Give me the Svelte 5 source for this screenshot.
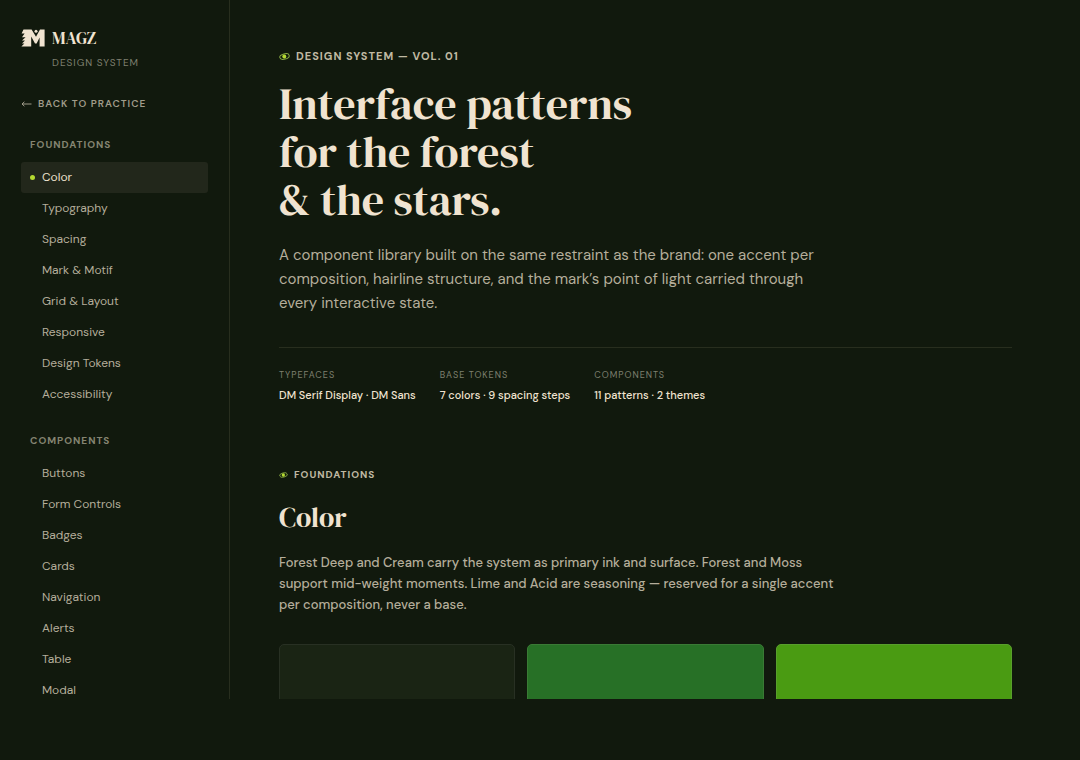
<script lang="ts">
  const groups = [
    {
      title: 'Foundations',
      items: ['Color', 'Typography', 'Spacing', 'Mark & Motif', 'Grid & Layout', 'Responsive', 'Design Tokens', 'Accessibility'],
    },
    {
      title: 'Components',
      items: ['Buttons', 'Form Controls', 'Badges', 'Cards', 'Navigation', 'Alerts', 'Table', 'Modal'],
    },
  ];

  const meta = [
    { label: 'Typefaces', value: 'DM Serif Display · DM Sans' },
    { label: 'Base tokens', value: '7 colors · 9 spacing steps' },
    { label: 'Components', value: '11 patterns · 2 themes' },
  ];

  const swatches = ['deep', 'forest', 'moss'];

  let active = $state('Color');

  function slug(name: string) {
    return name.toLowerCase().replace(/[^a-z]+/g, '-');
  }
</script>

{#snippet orbit()}
  <svg class="orbit" viewBox="0 0 22 14" aria-hidden="true">
    <ellipse cx="11" cy="7" rx="9.6" ry="5.2" transform="rotate(-14 11 7)" />
    <circle cx="10.6" cy="7" r="4" />
  </svg>
{/snippet}

<div class="shell">
  <aside class="sidebar">
    <div class="brand">
      <svg class="mark" viewBox="0 0 24 18" aria-hidden="true">
        <path d="M2.5 0.6H10.6L15 7.8L19 0.6H23.6V17.6H18.6V8.4L15.6 14.4H14L10.2 7.6V17.6H0.4L3.4 14.6H1L4 11.4H1L4.6 8.2H1L3.6 4.4H0.6Z" />
        <circle cx="15" cy="2.2" r="1.5" />
      </svg>
      <span class="brand-name">MAGZ</span>
      <span class="brand-sub">Design System</span>
    </div>

    <a class="back" href="#practice">
      <svg class="arrow" viewBox="0 0 11 8" aria-hidden="true">
        <path d="M10.5 4H1M3.4 1.8L1 4L3.4 6.2" />
      </svg>
      Back to practice
    </a>

    <nav>
      {#each groups as group (group.title)}
        <section class="group">
          <h2 class="group-title">{group.title}</h2>
          {#each group.items as item (item)}
            <a
              class="item"
              class:active={active === item}
              href="#{slug(item)}"
              onclick={() => (active = item)}
            >{item}</a>
          {/each}
        </section>
      {/each}
    </nav>
  </aside>

  <main class="content">
    <header class="hero">
      <p class="eyebrow">{@render orbit()}Design System — Vol. 01</p>
      <h1>Interface patterns<br />for the forest<br />&amp; the stars.</h1>
      <p class="lead">
        A component library built on the same restraint as the brand: one accent per
        composition, hairline structure, and the mark’s point of light carried through
        every interactive state.
      </p>
      <dl class="meta">
        {#each meta as m (m.label)}
          <div>
            <dt>{m.label}</dt>
            <dd>{m.value}</dd>
          </div>
        {/each}
      </dl>
    </header>

    <section id="color">
      <p class="eyebrow small">{@render orbit()}Foundations</p>
      <h2 class="title">Color</h2>
      <p class="body">
        Forest Deep and Cream carry the system as primary ink and surface. Forest and Moss
        support mid-weight moments. Lime and Acid are seasoning — reserved for a single accent
        per composition, never a base.
      </p>
      <div class="swatches">
        {#each swatches as name (name)}
          <div class="swatch {name}"></div>
        {/each}
      </div>
    </section>
  </main>
</div>

<style>
  :global(body) {
    margin: 0;
    background: #11190d;
  }

  .shell {
    --cream: #f0e3d0;
    --muted: #b5ae9b;
    --faint: #7f8070;
    --line: #282e1e;
    --lime: #b4d931;
    --sans: 'DM Sans', 'Open Sans', sans-serif;
    --serif: 'DM Serif Display', 'Liberation Serif', serif;
    display: grid;
    grid-template-columns: 230px 1fr;
    height: calc(100vh - 61px);
    overflow: hidden;
    color: var(--cream);
    font-family: var(--sans);
  }

  h1,
  h2,
  p,
  dl,
  dd {
    margin: 0;
  }

  a {
    color: inherit;
    text-decoration: none;
  }

  /* Sidebar */
  .sidebar {
    box-sizing: border-box;
    padding: 28px 21px 0;
    border-right: 1px solid var(--line);
  }

  .brand {
    display: grid;
    grid-template-columns: 24px 1fr;
    column-gap: 7px;
    align-items: center;
  }

  .mark {
    width: 24px;
    height: 18px;
    fill: var(--cream);
  }

  .brand-name {
    font: 400 17px/20px var(--serif);
  }

  .brand-sub {
    grid-column: 2;
    margin-top: 7px;
    font-size: 10px;
    line-height: 16px;
    letter-spacing: 1px;
    text-transform: uppercase;
    color: var(--faint);
  }

  .back {
    display: flex;
    align-items: center;
    gap: 6px;
    margin-top: 25px;
    font-size: 10px;
    font-weight: 600;
    line-height: 16px;
    letter-spacing: 1px;
    text-transform: uppercase;
    color: #a09c8a;
  }

  .arrow {
    width: 11px;
    height: 8px;
    fill: none;
    stroke: currentColor;
  }

  .group {
    padding-top: 25px;
  }

  .group + .group {
    padding-top: 23px;
  }

  .group-title {
    margin-bottom: 9px;
    padding-left: 9px;
    font-size: 10px;
    font-weight: 700;
    line-height: 16px;
    letter-spacing: 1px;
    text-transform: uppercase;
    color: #858572;
  }

  .item {
    display: flex;
    align-items: center;
    padding: 6px 9px 6px 21px;
    border-radius: 3px;
    font-size: 12px;
    line-height: 19px;
    color: var(--muted);
  }

  .item.active {
    gap: 7px;
    padding-left: 9px;
    background: #22271b;
    color: var(--cream);
  }

  .item.active::before {
    content: '';
    width: 5px;
    height: 5px;
    border-radius: 50%;
    background: var(--lime);
  }

  /* Content */
  .content {
    padding: 48px 68px 0 49px;
  }

  .eyebrow {
    display: flex;
    align-items: center;
    gap: 6px;
    font-size: 11px;
    font-weight: 700;
    line-height: 16px;
    letter-spacing: 1px;
    text-transform: uppercase;
    color: #c0b9a3;
  }

  .orbit {
    width: 11px;
    height: 7px;
    fill: none;
    stroke: #8aac45;
    stroke-width: 2;
  }

  .orbit circle {
    fill: var(--lime);
    stroke: none;
  }

  .small {
    font-size: 10px;
  }

  .small .orbit {
    width: 9px;
    height: 6px;
  }

  h1 {
    margin-top: 16px;
    font: 400 44px/48px var(--serif);
  }

  .lead {
    max-width: 540px;
    margin-top: 19px;
    font-size: 15px;
    line-height: 24px;
    color: var(--muted);
  }

  .meta {
    display: flex;
    gap: 24px;
    margin-top: 32px;
    padding-top: 19px;
    border-top: 1px solid var(--line);
  }

  dt {
    font-size: 9px;
    line-height: 16px;
    letter-spacing: 1px;
    text-transform: uppercase;
    color: var(--faint);
  }

  dd {
    margin-top: 4px;
    font-size: 11px;
    font-weight: 500;
    line-height: 16px;
  }

  #color {
    margin-top: 64px;
  }

  .title {
    margin-top: 17px;
    font: 400 28px/34px var(--serif);
  }

  .body {
    max-width: 568px;
    margin-top: 18px;
    font-size: 13px;
    font-weight: 500;
    line-height: 21px;
    color: var(--muted);
  }

  .swatches {
    display: grid;
    grid-template-columns: repeat(3, 1fr);
    gap: 12px;
    margin-top: 29px;
  }

  .swatch {
    box-sizing: border-box;
    height: 96px;
    border: 1px solid #283023;
    border-radius: 5px;
  }

  .deep {
    background: #1a2414;
  }

  .forest {
    border-color: #3a7a35;
    background: #277026;
  }

  .moss {
    border-color: #599f2c;
    background: #4a9b12;
  }
</style>
